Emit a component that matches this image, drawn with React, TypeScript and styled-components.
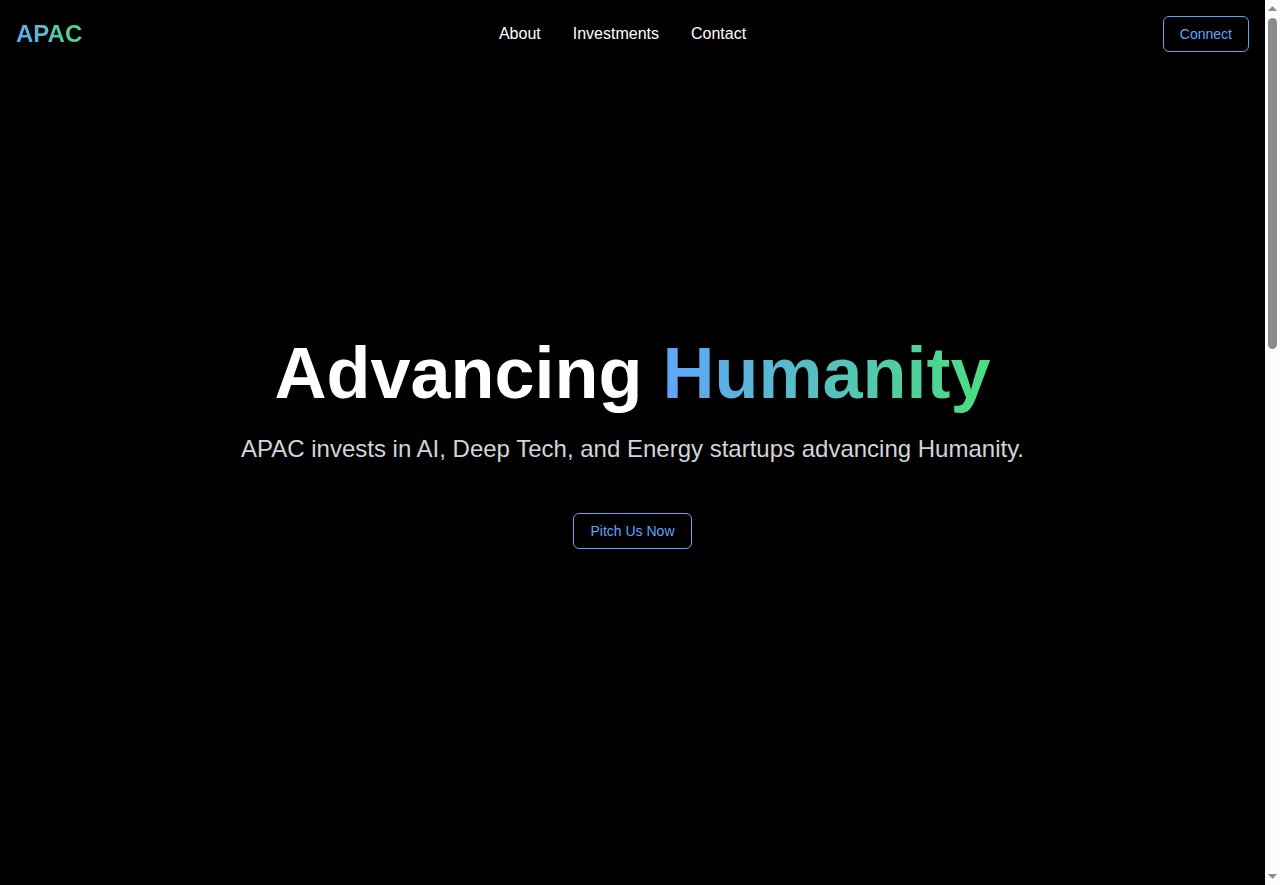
import React from "react";
import styled, { createGlobalStyle, css } from "styled-components";

const GlobalStyle = createGlobalStyle`
  *, *::before, *::after { box-sizing: border-box; }
  body {
    margin: 0;
    background: #000;
    color: #fff;
    font-family: "Liberation Sans", Arial, sans-serif;
    font-size: 16px;
    line-height: 24px;
  }
`;

const gradientText = css`
  background-image: linear-gradient(to right, #60a5fa, #4ade80);
  background-clip: text;
  -webkit-background-clip: text;
  color: transparent;
`;

const Shell = styled.div`
  display: grid;
  grid-template-columns: minmax(0, 1fr) 15px;
  min-height: 100vh;
`;

/* The header and the hero share one cell, so the hero centres on the full height. */
const Page = styled.div`
  display: grid;
  grid-template: 1fr / 1fr;
`;

const Header = styled.header`
  grid-area: 1 / 1;
  align-self: start;
  z-index: 1;
  display: flex;
  align-items: center;
  justify-content: space-between;
  padding: 16px;
`;

const Logo = styled.a`
  ${gradientText}
  font-size: 24px;
  line-height: 32px;
  font-weight: 700;
  text-decoration: none;
`;

const Nav = styled.nav`
  display: flex;
  gap: 32px;
`;

const NavLink = styled.a`
  color: #fff;
  text-decoration: none;
  &:hover { color: #60a5fa; }
`;

const OutlineButton = styled.button`
  height: 36px;
  padding: 0 16px;
  border: 1px solid #60a5fa;
  border-radius: 6px;
  background: transparent;
  color: #60a5fa;
  font-family: inherit;
  font-size: 14px;
  line-height: 20px;
  cursor: pointer;
  &:hover { background: #60a5fa; color: #000; }
`;

const Hero = styled.main`
  grid-area: 1 / 1;
  display: flex;
  flex-direction: column;
  align-items: center;
  justify-content: center;
  text-align: center;
`;

const Title = styled.h1`
  margin: 0 0 24px;
  font-size: 72px;
  line-height: 72px;
  font-weight: 700;
`;

const Highlight = styled.span`
  ${gradientText}
`;

const Tagline = styled.p`
  margin: 0 0 48px;
  color: #d1d5db;
  font-size: 24px;
  line-height: 32px;
`;

const ScrollTrack = styled.div`
  position: sticky;
  top: 0;
  height: 100vh;
  display: flex;
  flex-direction: column;
  align-items: center;
  padding: 6px 0;
  background: #fcfcfc;
`;

const ScrollArrow = styled.svg`
  flex: none;
  display: block;
  fill: #8b8b8b;
`;

const ScrollLane = styled.div`
  flex: 1;
  width: 9px;
  padding: 7px 0;
`;

const ScrollThumb = styled.div`
  height: 39%;
  border-radius: 5px;
  background: #8b8b8b;
`;

const links = ["About", "Investments", "Contact"];

export default function App() {
  return (
    <>
      <GlobalStyle />
      <Shell>
        <Page>
          <Header>
            <Logo href="#">APAC</Logo>
            <Nav>
              {links.map((label) => (
                <NavLink key={label} href={`#${label.toLowerCase()}`}>
                  {label}
                </NavLink>
              ))}
            </Nav>
            <OutlineButton type="button">Connect</OutlineButton>
          </Header>
          <Hero>
            <Title>
              Advancing <Highlight>Humanity</Highlight>
            </Title>
            <Tagline>
              APAC invests in AI, Deep Tech, and Energy startups advancing Humanity.
            </Tagline>
            <OutlineButton type="button">Pitch Us Now</OutlineButton>
          </Hero>
        </Page>
        <ScrollTrack aria-hidden="true">
          <ScrollArrow width="9" height="5" viewBox="0 0 9 5">
            <path d="M4.5 0 9 5H0Z" />
          </ScrollArrow>
          <ScrollLane>
            <ScrollThumb />
          </ScrollLane>
          <ScrollArrow width="9" height="5" viewBox="0 0 9 5">
            <path d="M0 0h9L4.5 5Z" />
          </ScrollArrow>
        </ScrollTrack>
      </Shell>
    </>
  );
}
